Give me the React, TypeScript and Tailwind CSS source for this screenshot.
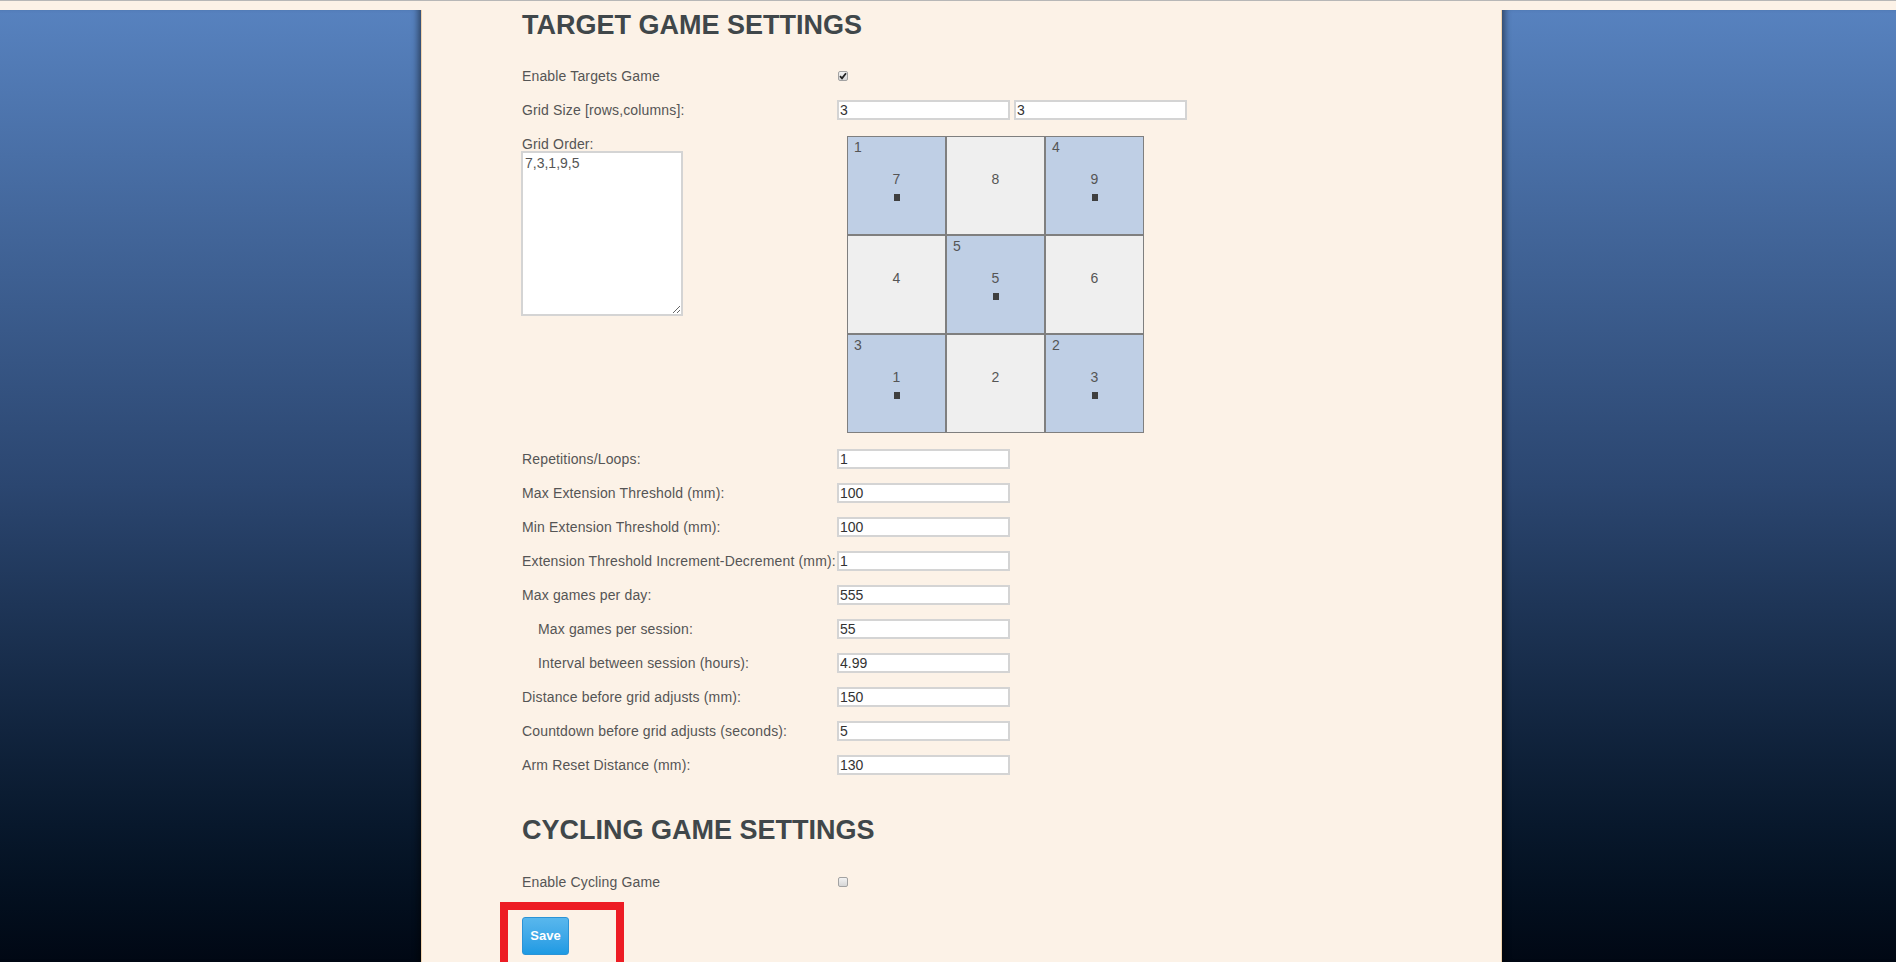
import React from 'react';

type Cell = { n: number; order?: number };

const CELLS: Cell[] = [
  { n: 7, order: 1 },
  { n: 8 },
  { n: 9, order: 4 },
  { n: 4 },
  { n: 5, order: 5 },
  { n: 6 },
  { n: 1, order: 3 },
  { n: 2 },
  { n: 3, order: 2 },
];

const FIELDS: { label: string; value: string; indent?: boolean }[] = [
  { label: 'Repetitions/Loops:', value: '1' },
  { label: 'Max Extension Threshold (mm):', value: '100' },
  { label: 'Min Extension Threshold (mm):', value: '100' },
  { label: 'Extension Threshold Increment-Decrement (mm):', value: '1' },
  { label: 'Max games per day:', value: '555' },
  { label: 'Max games per session:', value: '55', indent: true },
  { label: 'Interval between session (hours):', value: '4.99', indent: true },
  { label: 'Distance before grid adjusts (mm):', value: '150' },
  { label: 'Countdown before grid adjusts (seconds):', value: '5' },
  { label: 'Arm Reset Distance (mm):', value: '130' },
];

function Checkbox({ checked }: { checked?: boolean }) {
  return (
    <span className="ml-[1px] flex h-[10px] w-[10px] items-center justify-center rounded-[2px] border border-[#a2a2a2] bg-gradient-to-b from-[#f2f2f2] to-[#d6d6d6]">
      {checked && (
        <svg width="8" height="8" viewBox="0 0 8 8">
          <path d="M1 4.2 L3 6.3 L7 1.2" fill="none" stroke="#222" strokeWidth="1.8" />
        </svg>
      )}
    </span>
  );
}

function TextInput({ value, className = '' }: { value: string; className?: string }) {
  return (
    <input
      readOnly
      value={value}
      className={`h-[20px] w-[173px] border-2 border-[#d4d4d4] bg-white px-[1px] text-[14px] leading-4 text-[#333] outline-none ${className}`}
    />
  );
}

function Row({ label, children, indent }: { label: string; children: React.ReactNode; indent?: boolean }) {
  return (
    <div className="flex h-[34px] items-center">
      <div className={`w-[315px] shrink-0 whitespace-nowrap leading-4 tracking-[0.15px] ${indent ? 'pl-4' : ''}`}>
        {label}
      </div>
      {children}
    </div>
  );
}

function Heading({ children, className = '' }: { children: React.ReactNode; className?: string }) {
  return <h2 className={`text-[27px] font-bold leading-[32px] text-[#40474a] ${className}`}>{children}</h2>;
}

function SidePanel({ side }: { side: 'left' | 'right' }) {
  const edge =
    side === 'left'
      ? 'border-r border-[#efd3ad] shadow-[inset_-7px_0_6px_-4px_rgba(0,0,0,0.45)]'
      : 'border-l border-[#efd3ad] shadow-[inset_7px_0_6px_-4px_rgba(0,0,0,0.45)]';
  return (
    <div className={`h-full bg-gradient-to-b from-[#5782bf] via-[#2b4670] to-[#010814] ${edge}`} />
  );
}

export default function App() {
  return (
    <div className="h-[962px] overflow-hidden bg-[#fcf2e7] font-['Liberation_Sans',Arial,sans-serif] text-[14px] text-[#555]">
      <div className="h-px bg-[#b7b7b7]" />
      <div className="flex h-[961px]">
        <div className="w-[422px] shrink-0 pt-[9px]">
          <SidePanel side="left" />
        </div>

        <div className="w-[1079px] shrink-0 pl-[100px] pt-[8px]">
          <Heading>TARGET GAME SETTINGS</Heading>

          <div className="mt-[18px]">
            <Row label="Enable Targets Game">
              <Checkbox checked />
            </Row>
            <Row label="Grid Size [rows,columns]:">
              <TextInput value="3" />
              <TextInput value="3" className="ml-[4px]" />
            </Row>

            <div className="flex h-[315px]">
              <div className="w-[315px] shrink-0 pt-[9px]">
                <div className="leading-4 tracking-[0.15px]">Grid Order:</div>
                <textarea
                  readOnly
                  value="7,3,1,9,5"
                  className="-ml-px -mt-px block h-[165px] w-[162px] resize border-2 border-[#d4d4d4] bg-white px-[2px] pt-[2px] text-[14px] leading-4 text-[#555] outline-none"
                />
              </div>
              <div className="ml-[10px] mt-[9px] grid h-[297px] w-[297px] grid-cols-3">
                {CELLS.map((c, i) => (
                  <div
                    key={i}
                    className={`relative flex h-[99px] flex-col items-center justify-center border border-[#7f7f7f] ${
                      c.order ? 'bg-[#bfcfe5]' : 'bg-[#efefef]'
                    }`}
                  >
                    {c.order && <span className="absolute left-[6px] top-[2px] leading-4">{c.order}</span>}
                    <span className="leading-4">{c.n}</span>
                    <span className={`mt-[7px] h-[7px] w-[6px] ${c.order ? 'bg-[#3f3f3f]' : 'bg-transparent'}`} />
                  </div>
                ))}
              </div>
            </div>

            {FIELDS.map((f) => (
              <Row key={f.label} label={f.label} indent={f.indent}>
                <TextInput value={f.value} />
              </Row>
            ))}
          </div>

          <Heading className="mt-[32px]">CYCLING GAME SETTINGS</Heading>
          <div className="mt-[19px]">
            <Row label="Enable Cycling Game">
              <Checkbox />
            </Row>
          </div>

          <div className="relative mt-[18px] w-fit">
            <button className="h-[38px] w-[47px] rounded-[3px] border border-[#2b93d6] bg-gradient-to-b from-[#58b7ed] to-[#1d9ae3] text-[13px] font-bold text-white">
              Save
            </button>
            {/* annotation box */}
            <div className="pointer-events-none absolute -left-[22px] -top-[15px] h-[80px] w-[124px] border-[8px] border-[#ed1c24]" />
          </div>
        </div>

        <div className="flex-1 pt-[9px]">
          <SidePanel side="right" />
        </div>
      </div>
    </div>
  );
}
